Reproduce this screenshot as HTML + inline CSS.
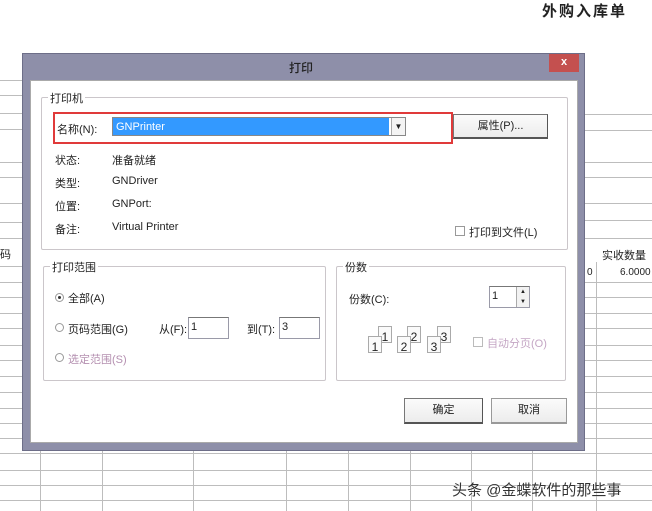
<!DOCTYPE html>
<html><head><meta charset="utf-8"><style>
*{margin:0;padding:0;box-sizing:border-box}
body{width:652px;height:511px;background:#fff;position:relative;overflow:hidden;font-family:"Liberation Sans","Noto Sans CJK SC",sans-serif;font-size:11px;color:#222}
.a{position:absolute}
.h{position:absolute;height:1px;background:#bdbdbd}
.v{position:absolute;width:1px;background:#bdbdbd}
.grp{position:absolute;border:1px solid #cbc6ca;border-radius:2px}
.gl{position:absolute;top:-8px;left:6px;background:#fff;padding:0 2px;font-size:11px}
.btn{position:absolute;border:1px solid #777;border-right-color:#555;border-bottom:2px solid #555;background:linear-gradient(#fbfbfb,#ececec);text-align:center;font-size:11px}
.inp{position:absolute;border:1px solid #9a9aa8;border-top-color:#777;background:#fff;font-size:11px;padding-left:2px;line-height:18px}
.rad{position:absolute;width:9px;height:9px;border:1px solid #999;border-radius:50%;background:#fff}
.chk{position:absolute;width:10px;height:10px;border:1px solid #999;background:#fff}
.pg{position:absolute;width:14px;height:17px;border:1px solid #aaa;background:#fafafa;font-size:12px;line-height:20px;text-align:center}
</style></head><body>
<div class="a" style="left:542px;top:0;font-size:15px;font-weight:bold;letter-spacing:2px">外购入库单</div>
<div class="h" style="left:0;top:80px;width:22px"></div>
<div class="h" style="left:0;top:95px;width:22px"></div>
<div class="h" style="left:0;top:113px;width:22px"></div>
<div class="h" style="left:0;top:129px;width:22px"></div>
<div class="h" style="left:0;top:162px;width:22px"></div>
<div class="h" style="left:0;top:177px;width:22px"></div>
<div class="h" style="left:0;top:203px;width:22px"></div>
<div class="h" style="left:0;top:222px;width:22px"></div>
<div class="h" style="left:0;top:238px;width:22px"></div>
<div class="a" style="left:0;top:246px;font-size:11px">码</div>
<div class="h" style="left:0;top:266px;width:22px"></div>
<div class="h" style="left:0;top:282px;width:22px"></div>
<div class="h" style="left:0;top:297px;width:22px"></div>
<div class="h" style="left:0;top:313px;width:22px"></div>
<div class="h" style="left:0;top:328px;width:22px"></div>
<div class="h" style="left:0;top:345px;width:22px"></div>
<div class="h" style="left:0;top:360px;width:22px"></div>
<div class="h" style="left:0;top:376px;width:22px"></div>
<div class="h" style="left:0;top:392px;width:22px"></div>
<div class="h" style="left:0;top:408px;width:22px"></div>
<div class="h" style="left:0;top:423px;width:22px"></div>
<div class="h" style="left:0;top:438px;width:22px"></div>
<div class="h" style="left:585px;top:114px;width:67px"></div>
<div class="h" style="left:585px;top:130px;width:67px"></div>
<div class="h" style="left:585px;top:162px;width:67px"></div>
<div class="h" style="left:585px;top:177px;width:67px"></div>
<div class="h" style="left:585px;top:203px;width:67px"></div>
<div class="h" style="left:585px;top:220px;width:67px"></div>
<div class="h" style="left:585px;top:238px;width:67px"></div>
<div class="a" style="left:602px;top:247px;font-size:11px">实收数量</div>
<div class="a" style="left:587px;top:267px;font-size:10px">0</div>
<div class="a" style="left:620px;top:267px;font-size:10px">6.0000</div>
<div class="h" style="left:585px;top:282px;width:67px"></div>
<div class="h" style="left:585px;top:297px;width:67px"></div>
<div class="h" style="left:585px;top:313px;width:67px"></div>
<div class="h" style="left:585px;top:328px;width:67px"></div>
<div class="h" style="left:585px;top:345px;width:67px"></div>
<div class="h" style="left:585px;top:360px;width:67px"></div>
<div class="h" style="left:585px;top:376px;width:67px"></div>
<div class="h" style="left:585px;top:392px;width:67px"></div>
<div class="h" style="left:585px;top:408px;width:67px"></div>
<div class="h" style="left:585px;top:423px;width:67px"></div>
<div class="h" style="left:585px;top:438px;width:67px"></div>
<div class="v" style="left:596px;top:262px;height:249px"></div>
<div class="h" style="left:0;top:453px;width:652px"></div>
<div class="h" style="left:0;top:470px;width:652px"></div>
<div class="h" style="left:0;top:485px;width:652px"></div>
<div class="h" style="left:0;top:500px;width:652px"></div>
<div class="v" style="left:40px;top:451px;height:60px"></div>
<div class="v" style="left:102px;top:451px;height:60px"></div>
<div class="v" style="left:193px;top:451px;height:60px"></div>
<div class="v" style="left:286px;top:451px;height:60px"></div>
<div class="v" style="left:348px;top:451px;height:60px"></div>
<div class="v" style="left:410px;top:451px;height:60px"></div>
<div class="v" style="left:471px;top:451px;height:60px"></div>
<div class="v" style="left:532px;top:451px;height:60px"></div>
<div class="a" style="left:22px;top:53px;width:563px;height:398px;background:#8e8fa9;border:1px solid #6d6e88"></div>
<div class="a" style="left:30px;top:80px;width:548px;height:363px;background:#fff;border:1px solid #aaa"></div>
<div class="a" style="left:289px;top:59px;font-size:12px;font-weight:500">打印</div>
<div class="a" style="left:549px;top:54px;width:30px;height:18px;background:#c4504f;color:#fff;font-weight:bold;text-align:center;line-height:17px;font-size:11px">x</div>
<div class="grp" style="left:41px;top:97px;width:527px;height:153px"><span class="gl">打印机</span></div>
<div class="a" style="left:53px;top:112px;width:400px;height:32px;border:2px solid #e03a3a"></div>
<div class="a" style="left:57px;top:121px">名称(N):</div>
<div class="a" style="left:112px;top:117px;width:294px;height:19px;border:1px solid #888;background:#fff"></div>
<div class="a" style="left:113px;top:118px;width:276px;height:17px;background:#3399ff;color:#fff;line-height:18px;padding-left:3px;font-size:11px">GNPrinter</div>
<div class="a" style="left:391px;top:118px;width:14px;height:17px;background:#f4f4f4;border-left:1px solid #aaa;text-align:center;font-size:8px;line-height:17px">▼</div>
<div class="btn" style="left:453px;top:114px;width:95px;height:25px;line-height:22px">属性(P)...</div>
<div class="a" style="left:55px;top:152px">状态:</div><div class="a" style="left:112px;top:152px">准备就绪</div>
<div class="a" style="left:55px;top:175px">类型:</div><div class="a" style="left:112px;top:175px">GNDriver</div>
<div class="a" style="left:55px;top:198px">位置:</div><div class="a" style="left:112px;top:198px">GNPort:</div>
<div class="a" style="left:55px;top:221px">备注:</div><div class="a" style="left:112px;top:221px">Virtual Printer</div>
<div class="chk" style="left:455px;top:226px"></div>
<div class="a" style="left:469px;top:224px">打印到文件(L)</div>
<div class="grp" style="left:43px;top:266px;width:283px;height:115px"><span class="gl">打印范围</span></div>
<div class="rad" style="left:55px;top:293px"><div style="position:absolute;left:2px;top:2px;width:3px;height:3px;background:#333;border-radius:50%"></div></div>
<div class="a" style="left:68px;top:290px">全部(A)</div>
<div class="rad" style="left:55px;top:323px"></div>
<div class="a" style="left:68px;top:321px">页码范围(G)</div>
<div class="a" style="left:159px;top:321px">从(F):</div>
<div class="inp" style="left:188px;top:317px;width:41px;height:22px">1</div>
<div class="a" style="left:247px;top:321px">到(T):</div>
<div class="inp" style="left:279px;top:317px;width:41px;height:22px">3</div>
<div class="rad" style="left:55px;top:353px"></div>
<div class="a" style="left:68px;top:351px;color:#b48fb0">选定范围(S)</div>
<div class="grp" style="left:336px;top:266px;width:230px;height:115px"><span class="gl">份数</span></div>
<div class="a" style="left:349px;top:291px">份数(C):</div>
<div class="inp" style="left:489px;top:286px;width:41px;height:22px">1</div>
<div class="a" style="left:516px;top:287px;width:13px;height:20px;border-left:1px solid #aaa;background:#f2f2f2;font-size:6px;line-height:10px;text-align:center">▲<br>▼</div>
<div class="pg" style="left:378px;top:326px">1</div><div class="pg" style="left:368px;top:336px">1</div>
<div class="pg" style="left:407px;top:326px">2</div><div class="pg" style="left:397px;top:336px">2</div>
<div class="pg" style="left:437px;top:326px">3</div><div class="pg" style="left:427px;top:336px">3</div>
<div class="chk" style="left:473px;top:337px;border-color:#bbb"></div>
<div class="a" style="left:487px;top:335px;color:#c4a6c4">自动分页(O)</div>
<div class="btn" style="left:404px;top:398px;width:79px;height:26px;line-height:23px">确定</div>
<div class="btn" style="left:491px;top:398px;width:76px;height:26px;line-height:23px;border-color:#999">取消</div>
<div class="a" style="left:452px;top:479px;font-size:15px;color:#333;text-shadow:0 0 2px #fff">头条 @金蝶软件的那些事</div>
</body></html>
